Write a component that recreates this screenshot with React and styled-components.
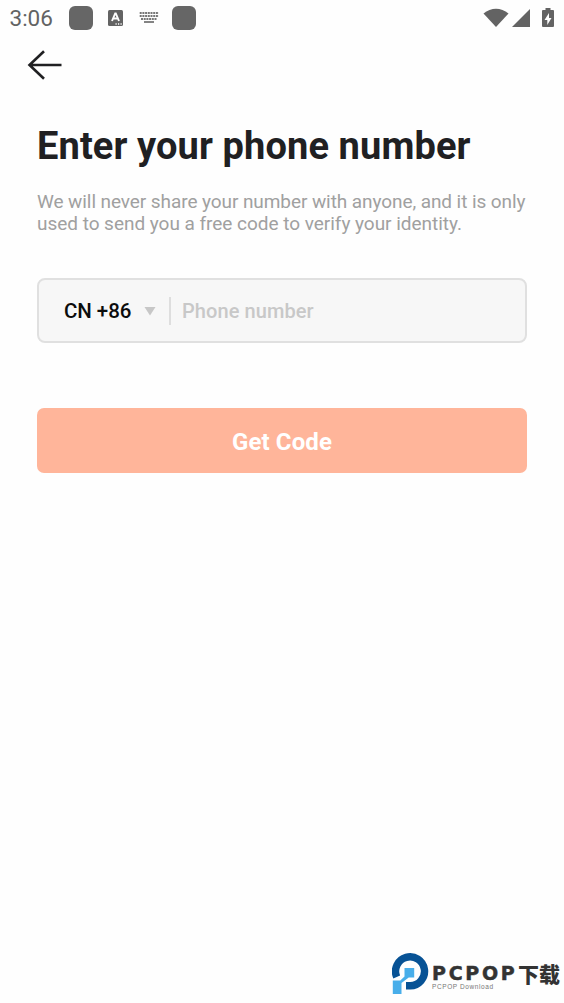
import styled, { createGlobalStyle } from "styled-components";

import React, { useState } from "react";

const GlobalStyle = createGlobalStyle`
    * {
        box-sizing: border-box;
    }

    body {
        margin: 0;
        background-color: #fefefe;
        font-family: Roboto, "Noto Sans CJK SC", sans-serif;
    }
`

const Page = styled.div`
    display: flex;
    flex-direction: column;
    width: 564px;
    height: 1003px;
    overflow: hidden;
`

const StatusBar = styled.header`
    display: flex;
    align-items: center;
    justify-content: space-between;
    height: 36px;
    padding: 0 10px 0 9px;
    color: #636363;
`

const StatusGroup = styled.div`
    display: flex;
    align-items: center;
`

const Clock = styled.span`
    width: 60px;
    padding-left: 0.5px;
    font-size: 22.5px;
    line-height: 36px;
`

const AppSquare = styled.span`
    width: 24px;
    height: 24px;
    border-radius: 6px;
    background-color: #666;
`

const StatusIcon = styled.svg`
    display: block;
    margin-left: ${(props) => props.$gap || 0}px;
    margin-right: ${(props) => props.$after || 0}px;
`

const NavBar = styled.nav`
    height: 60px;
    padding: 12px 27px;
`

const BackButton = styled.button`
    display: block;
    padding: 0;
    border: none;
    background: none;
`

const Content = styled.main`
    flex: 1;
    padding: 26px 37px 0;
`

const Title = styled.h1`
    margin: 0;
    font-size: 38px;
    line-height: 48px;
    font-weight: 700;
    letter-spacing: 0.11px;
    color: #202022;
    white-space: nowrap;
`

const Description = styled.p`
    margin: 21px 0 0;
    font-size: 19px;
    line-height: 22px;
    color: #a0a0a0;
    white-space: nowrap;
`

const Line = styled.span`
    display: block;
    letter-spacing: ${(props) => props.$spacing}px;
`

const PhoneField = styled.div`
    display: flex;
    align-items: center;
    height: 65px;
    margin-top: 43px;
    padding-left: 25px;
    border: 2px solid #e0e0e0;
    border-radius: 8px;
    background-color: #f7f7f7;
`

const CountryCode = styled.span`
    width: 80px;
    font-size: 20.5px;
    font-weight: 500;
    letter-spacing: -0.05px;
    color: #0c0c0c;
    white-space: nowrap;
`

const Divider = styled.span`
    width: 2px;
    height: 28px;
    margin: 0 11px 0 13px;
    background-color: #dedede;
`

const PhoneInput = styled.input`
    width: 300px;
    padding: 0;
    border: none;
    outline: none;
    background: none;
    font-family: inherit;
    font-size: 20px;
    font-weight: 500;
    letter-spacing: 0.08px;
    color: #0c0c0c;

    &::placeholder {
        color: #c8c8c8;
        opacity: 1;
    }
`

const CodeButton = styled.button`
    display: block;
    width: 100%;
    height: 65px;
    margin-top: 65px;
    padding: 2px 0 0;
    border: none;
    border-radius: 7px;
    background-color: #ffb59a;
    font-family: inherit;
    font-size: 24px;
    font-weight: 700;
    letter-spacing: 0.1px;
    color: #fff;
`

const Footer = styled.footer`
    display: flex;
    justify-content: flex-end;
    height: 51px;
    padding-right: 3px;
`

const BrandText = styled.div`
    width: 129px;
    margin-left: 3px;
    padding-top: 11px;
    white-space: nowrap;
`

const BrandName = styled.div`
    display: flex;
    align-items: center;
    height: 20px;
    color: #333;
`

const BrandLatin = styled.span`
    width: 85px;
    font-family: "DejaVu Sans", sans-serif;
    font-size: 19px;
    font-weight: 700;
    letter-spacing: 2.7px;
    -webkit-text-stroke: 0.5px #333;
`

const BrandChinese = styled.span`
    margin-left: 1px;
    font-family: "Noto Sans CJK SC", sans-serif;
    font-size: 21px;
    line-height: 19px;
    font-weight: 900;
`

const BrandCaption = styled.div`
    font-family: "Liberation Sans", sans-serif;
    font-size: 6.5px;
    line-height: 7px;
    letter-spacing: 0.6px;
    color: #777;
`

function KeyboardIcon() {
    const rows = [0.5, 3.5, 6.5];

    return (
        <StatusIcon $gap={16} $after={13} width="20" height="12" viewBox="0 0 20 12" stroke="#777">
            {rows.map((y, i) => (
                <path key={y} d={`M${i === 2 ? 2 : 0.7} ${y + 0.5}h${i === 2 ? 16 : 19}`} strokeWidth="2" strokeDasharray="2 0.7" />
            ))}
            <path d="M5 10h10" strokeWidth="1.8" />
        </StatusIcon>
    )
}

function BrandLogo() {
    return (
        <svg width="37" height="43" viewBox="0 0 37 43">
            <path d="M4.7 25A14.5 14.5 0 1 1 18.2 33.8H14" fill="none" stroke="#075295" strokeWidth="7.4" />
            <path d="M0 27.5h8.5l4-4V16h10v9.5h-6L9.5 31.5V43H0z" fill="#fefefe" stroke="#fefefe" strokeWidth="1.2" />
            <path d="M12.5 16h9.7v9.5h-5.5L9.5 31v11H.8V28.5h7.5l4.2-4z" fill="#48aeea" />
        </svg>
    )
}

function App() {
    const [phone, setPhone] = useState("");

    return (
        <Page>
            <GlobalStyle />
            <StatusBar>
                <StatusGroup>
                    <Clock>3:06</Clock>
                    <AppSquare />
                    <StatusIcon $gap={15} width="15" height="16" viewBox="0 0 15 16">
                        <rect width="15" height="16" rx="1.5" fill="currentColor" />
                        <path d="M4 11 7.2 3.5h.6L11 11M5.2 8.5h4.6" fill="none" stroke="#fff" strokeWidth="1.9" />
                        <path d="M7.5 14h1.2M10 14h1.2M12.5 14h1.2" stroke="#fff" strokeWidth="1.4" />
                    </StatusIcon>
                    <KeyboardIcon />
                    <AppSquare />
                </StatusGroup>
                <StatusGroup>
                    <StatusIcon width="26" height="20" viewBox="0 0 26 20" fill="currentColor">
                        <path d="M.5 5.5C8-.8 18-.8 25.5 5.5L13 19z" />
                    </StatusIcon>
                    <StatusIcon $gap={3} width="18" height="18" viewBox="0 0 18 18" fill="currentColor">
                        <path d="M0 18 18 0v18z" />
                    </StatusIcon>
                    <StatusIcon $gap={12} width="12" height="20" viewBox="0 0 12 20">
                        <path d="M3.5 0h5v2H11q1 0 1 1v15q0 1-1 1H1q-1 0-1-1V3q0-1 1-1h2.5z" fill="currentColor" />
                        <path d="M7 5 2.5 12H5.3v5L9.5 10H7z" fill="#fff" />
                    </StatusIcon>
                </StatusGroup>
            </StatusBar>

            <NavBar>
                <BackButton aria-label="Back">
                    <svg width="36" height="34" viewBox="0 0 36 34" fill="none" stroke="#202022" strokeWidth="2.6">
                        <path d="M17 3.2 2.5 17 17 30.8M2.5 17h32" />
                    </svg>
                </BackButton>
            </NavBar>

            <Content>
                <Title>Enter your phone number</Title>
                <Description>
                    <Line $spacing={-0.08}>We will never share your number with anyone, and it is only</Line>
                    <Line $spacing={-0.03}>used to send you a free code to verify your identity.</Line>
                </Description>
                <PhoneField>
                    <CountryCode>CN +86</CountryCode>
                    <svg width="12" height="10" viewBox="0 0 12 10">
                        <path d="M.5 1h11L6 9.5z" fill="#c7c7c7" />
                    </svg>
                    <Divider />
                    <PhoneInput
                        placeholder="Phone number"
                        value={phone}
                        onChange={(e) => setPhone(e.target.value)}
                    />
                </PhoneField>
                <CodeButton>Get Code</CodeButton>
            </Content>

            <Footer>
                <BrandLogo />
                <BrandText>
                    <BrandName>
                        <BrandLatin>PCPOP</BrandLatin>
                        <BrandChinese>下载</BrandChinese>
                    </BrandName>
                    <BrandCaption>PCPOP Download</BrandCaption>
                </BrandText>
            </Footer>
        </Page>
    )
}

export default App;
